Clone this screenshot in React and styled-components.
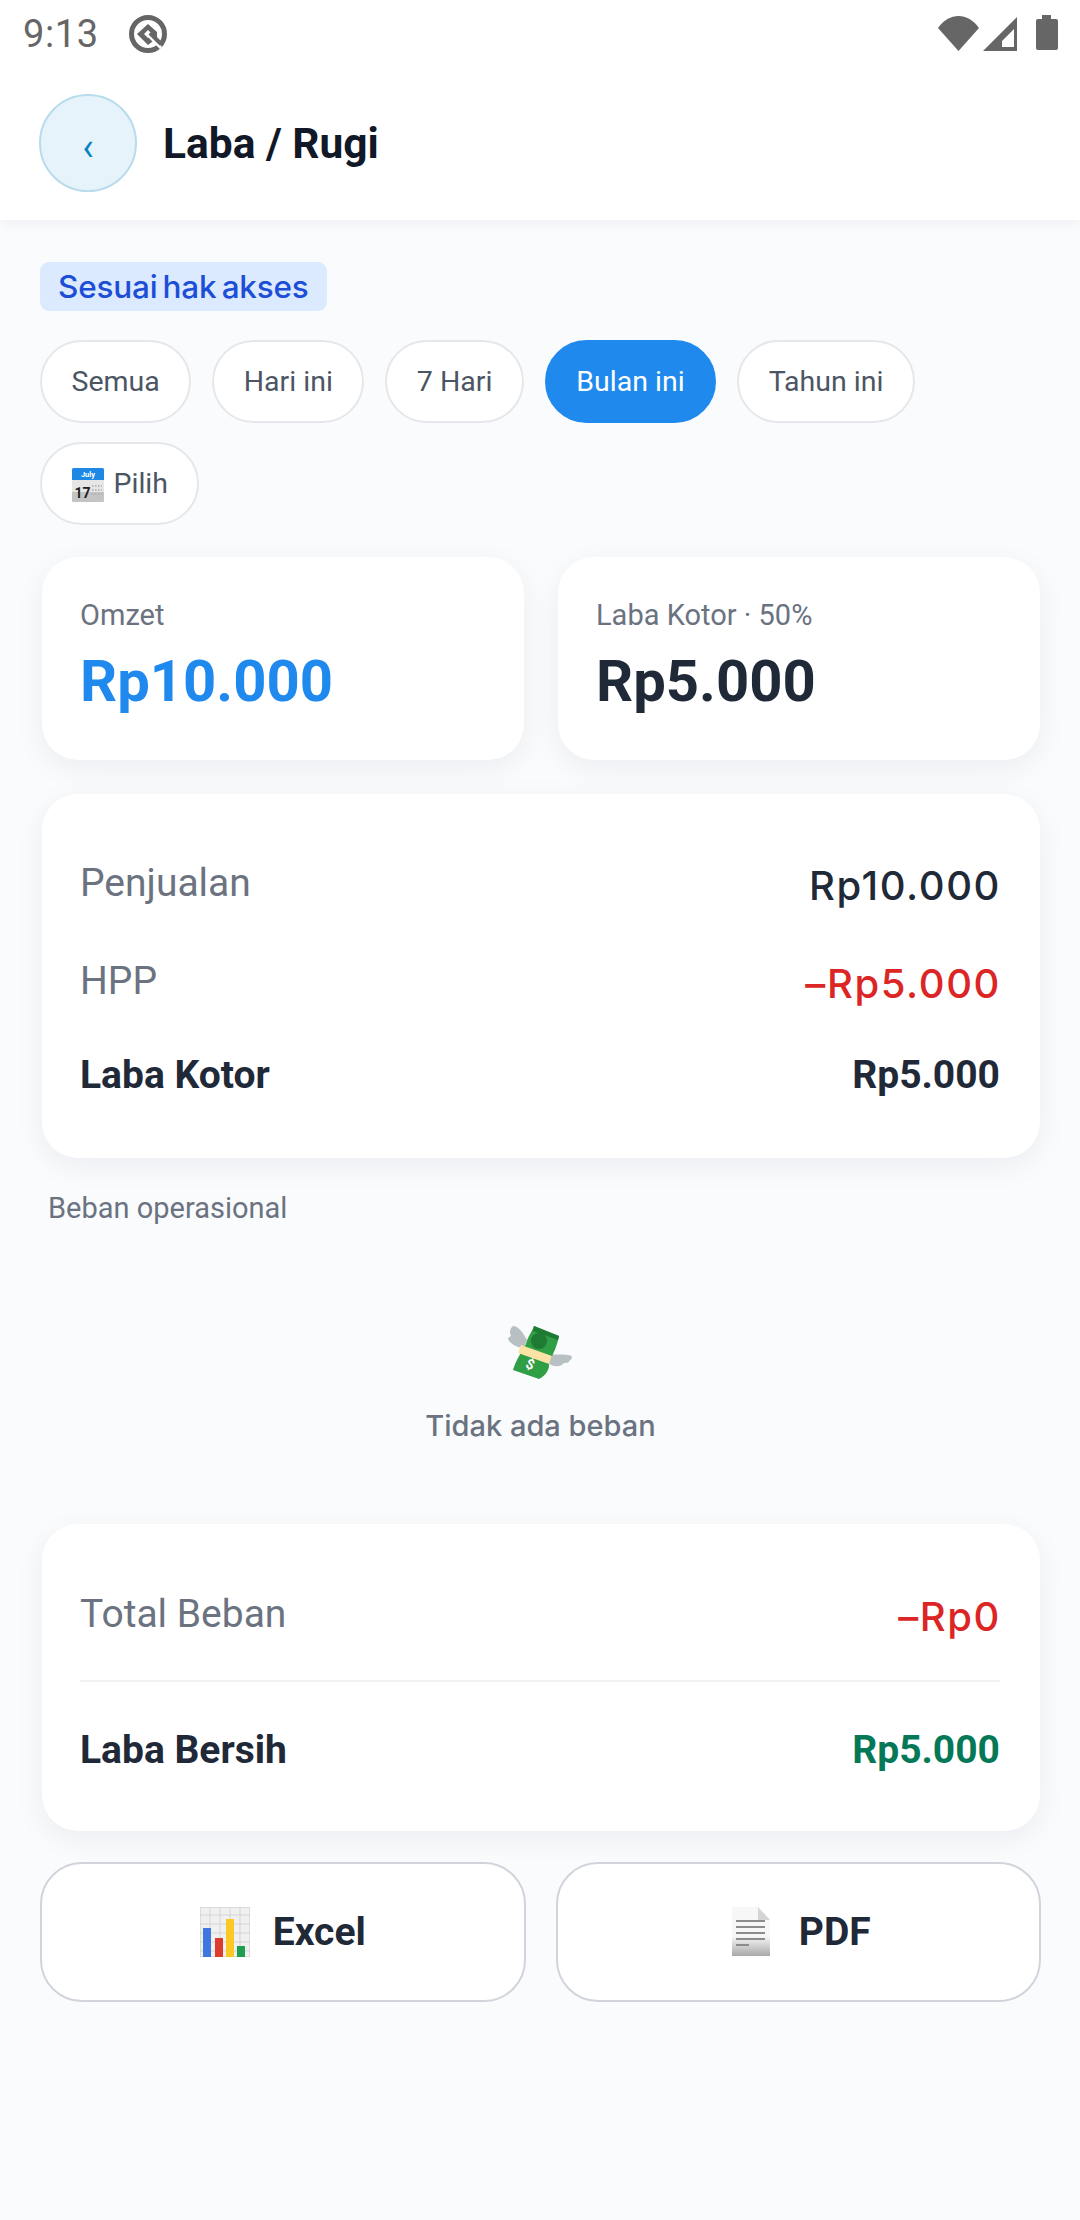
import styled, { createGlobalStyle } from "styled-components";

const Global = createGlobalStyle`
  html, body { margin: 0; padding: 0; background: #f9fbfd; }
  * { box-sizing: border-box; }
  body { font-family: Roboto, "Liberation Sans", sans-serif; }
`;

const WifiIcon = () => (
  <svg width="41" height="35" viewBox="0 0 41 35">
    <path d="M0 12C11 -4 30 -4 41 12L20.5 35Z" fill="#666" />
  </svg>
);

const SignalIcon = () => (
  <svg width="36" height="35" viewBox="0 0 36 35">
    <path fillRule="evenodd" d="M35 1V35H1ZM32 13L20 25V31H32Z" fill="#666" />
  </svg>
);

const BatteryIcon = () => (
  <svg width="22" height="36" viewBox="0 0 22 36">
    <path d="M6 0H15V4H20Q22 4 22 6V33Q22 35 20 35H2Q0 35 0 33V6Q0 4 2 4H6Z" fill="#666" />
  </svg>
);

const AtIcon = () => (
  <svg width="40" height="40" viewBox="0 0 40 40" fill="none">
    <circle cx="20" cy="20" r="16.5" stroke="#666" strokeWidth="5" />
    <path d="M9 20L20 10L29 18V24L20 31Z" fill="#666" />
    <path d="M16 20L20 16L24 20L20 24Z" fill="#fff" />
    <path d="M20 21L33 34" stroke="#fff" strokeWidth="3" />
    <path d="M22 19L33 30" stroke="#666" strokeWidth="4" />
  </svg>
);

const CalendarEmoji = () => (
  <svg width="32" height="34" viewBox="0 0 32 34">
    <rect x="0" y="0" width="32" height="34" rx="1.5" fill="#e6e6e6" />
    <path d="M0 24H32V32.5Q32 34 30.5 34H1.5Q0 34 0 32.5Z" fill="#c4c4c4" />
    <path d="M1.5 0H30.5Q32 0 32 1.5V12H0V1.5Q0 0 1.5 0Z" fill="#1e88e5" />
    <text x="16" y="9" fontSize="7.5" fontWeight="700" fill="#fff" textAnchor="middle" fontFamily="Roboto">July</text>
    <text x="2.5" y="30" fontSize="14" fontWeight="700" fill="#222" fontFamily="Roboto">17</text>
    <path d="M20 18h10M20 22h10M20 26h10" stroke="#aaa" strokeWidth="1.4" strokeDasharray="1.5 1.5" />
  </svg>
);

const MoneyEmoji = () => (
  <svg width="66" height="56" viewBox="0 0 66 56">
    <path d="M5 0C10 0 14 5 19 14L16 22C10 22 0 17 0 12C2 11 3 10 3 9C1 7 2 2 5 0Z" fill="#b9c0c4" />
    <path d="M40 28C48 29 54 28 60 29C65 29 65 33 62 34C61 37 58 37 56 37C52 42 44 41 39 36Z" fill="#b9c0c4" />
    <path d="M26 0L51 10C49 20 46 26 41 37C42 44 37 50 31 53L5 44C8 34 13 27 18 18C20 10 24 6 26 0Z" fill="#2f9e44" />
    <path d="M26 0L51 10L50 14L25 5Z" fill="#1f7a33" />
    <circle cx="31" cy="15" r="8" fill="#1f7a33" />
    <path d="M13 19L44 30L41 38L10 27Z" fill="#fbe3a6" />
    <text x="22" y="43" fontSize="14" fontWeight="700" fill="#fff" textAnchor="middle" fontFamily="Roboto" transform="rotate(22 22 39)">$</text>
  </svg>
);

const ChartEmoji = () => (
  <svg width="50" height="50" viewBox="0 0 50 50">
    <rect width="50" height="50" fill="#f0f0f0" stroke="#c8c8c8" />
    <path d="M0 8H50M0 17H50M0 26H50M0 35H50M0 44H50M10 0V50M20 0V50M30 0V50M40 0V50" stroke="#d4d4d4" strokeWidth="1" />
    <rect x="3" y="21" width="8" height="29" fill="#3f76e0" />
    <rect x="15" y="31" width="8" height="19" fill="#dc3b2e" />
    <rect x="26" y="12" width="8" height="38" fill="#fbc926" />
    <rect x="37" y="39" width="8" height="11" fill="#1e9e50" />
  </svg>
);

const PageEmoji = () => (
  <svg width="50" height="50" viewBox="0 0 50 50">
    <defs>
      <linearGradient id="pageFill" x1="0" y1="0" x2="0" y2="1">
        <stop offset="0.6" stopColor="#f7f7f7" />
        <stop offset="1" stopColor="#a8a8a8" />
      </linearGradient>
    </defs>
    <path d="M6 0H32L44 13V49H6Z" fill="url(#pageFill)" />
    <path d="M32 0L44 13H32Z" fill="#d5d5d5" />
    <path d="M10 14H39M10 20H39M10 26H39M10 32H39M10 38H23" stroke="#8c8c8c" strokeWidth="2" />
  </svg>
);

const Page = styled.div`
  width: 1080px;
  height: 2220px;
  background: #f9fbfd;
  overflow: hidden;
`;

const TopArea = styled.header`
  background: #fff;
  height: 220px;
  box-shadow: 0 3px 14px rgba(17, 24, 39, 0.05);
`;

const StatusBar = styled.div`
  height: 74px;
  padding: 13px 22px 0 23px;
  display: flex;
  align-items: flex-start;
  justify-content: space-between;
`;

const StatusLeft = styled.div`
  display: flex;
  align-items: center;
  gap: 29px;
`;

const Clock = styled.span`
  font-size: 38px;
  line-height: 42px;
  color: #666;
  letter-spacing: 0.6px;
`;

const StatusRight = styled.div`
  display: flex;
  align-items: center;
  gap: 3px;
  padding: 2px 0 0;
`;

const Battery = styled.span`
  display: flex;
  margin-left: 15px;
`;

const HeaderRow = styled.div`
  display: flex;
  align-items: center;
  gap: 26px;
  padding: 20px 39px 0;
`;

const BackButton = styled.button`
  width: 98px;
  height: 98px;
  border-radius: 50%;
  border: 2px solid #b8dcec;
  background: #e6f3fb;
  color: #0284c7;
  font: 400 38px/1 Roboto, sans-serif;
  padding: 8px 0 0;
  display: flex;
  align-items: center;
  justify-content: center;
`;

const Title = styled.h1`
  margin: 0;
  font-size: 42.5px;
  font-weight: 700;
  color: #111827;
`;

const Content = styled.main`
  padding: 42px 39px 0 40px;
  display: flex;
  flex-direction: column;
`;

const AccessBadge = styled.span`
  align-self: flex-start;
  height: 49px;
  padding: 0 18px;
  border-radius: 9px;
  background: #dbeafe;
  color: #1d4ed8;
  font: 500 31.5px/49px Inter, sans-serif;
  letter-spacing: -0.2px;
  word-spacing: -3px;
`;

const ChipRow = styled.div`
  display: flex;
  flex-wrap: wrap;
  gap: 19px 21px;
  margin-top: 29px;
`;

const Chip = styled.button`
  height: 83px;
  padding: 2px 29.5px 0;
  border-radius: 42px;
  border: 2px solid ${(p) => (p.$active ? "#2089ee" : "#e5e7eb")};
  background: ${(p) => (p.$active ? "#2089ee" : "#fff")};
  color: ${(p) => (p.$active ? "#fff" : "#4b5563")};
  font: 400 28.5px/1 Roboto, sans-serif;
  display: flex;
  align-items: center;
  gap: 10px;
`;

const StatRow = styled.div`
  display: grid;
  grid-template-columns: 1fr 1fr;
  gap: 34px;
  margin: 32px 1px 0 2px;
`;

const Card = styled.section`
  background: #fff;
  border-radius: 36px;
  box-shadow: 0 8px 30px rgba(17, 24, 39, 0.06);
`;

const StatCard = styled(Card)`
  height: 203px;
  padding: 41px 38px 0;
`;

const StatLabel = styled.div`
  font-size: 29px;
  line-height: 34px;
  color: #6b7280;
`;

const StatValue = styled.div`
  margin-top: 15px;
  font-size: 58px;
  line-height: 68px;
  font-weight: 700;
  color: ${(p) => p.$color};
`;

const SummaryCard = styled(Card)`
  margin: ${(p) => p.$margin};
  height: ${(p) => p.$height}px;
  padding: ${(p) => p.$top}px 40px 0 38px;
  display: flex;
  flex-direction: column;
`;

const Row = styled.div`
  display: flex;
  align-items: center;
  justify-content: space-between;
  height: ${(p) => p.$height}px;
`;

const RowLabel = styled.span`
  font-size: 39px;
  color: #6b7280;
  padding-bottom: 6px;
`;

const RowValue = styled.span`
  font: 500 40px/1 Inter, sans-serif;
  letter-spacing: 1.6px;
  margin-right: -1px;
  color: ${(p) => p.$color};
`;

const BoldLabel = styled.span`
  font-size: 39px;
  font-weight: 700;
  color: #1f2937;
`;

const BoldValue = styled(BoldLabel)`
  color: ${(p) => p.$color};
`;

const Divider = styled.div`
  height: 2px;
  margin-top: 5px;
  background: #f0f1f3;
`;

const SectionLabel = styled.div`
  margin: 34px 0 0 8px;
  font-size: 29px;
  line-height: 32px;
  color: #6b7280;
`;

const EmptyState = styled.div`
  display: flex;
  flex-direction: column;
  align-items: center;
  padding-top: 102px;
  height: 300px;
`;

const EmptyText = styled.div`
  margin-top: 26px;
  font: 500 29px/36px Inter, sans-serif;
  color: #6b7280;
`;

const ActionRow = styled.div`
  display: grid;
  grid-template-columns: 1fr 1fr;
  gap: 30px;
  margin: 31px 0 0;
`;

const ActionButton = styled.button`
  height: 140px;
  border-radius: 42px;
  border: 2px solid #d1d5db;
  background: #fff;
  display: flex;
  align-items: center;
  justify-content: center;
  gap: 23px;
  font: 700 39px/1 Roboto, sans-serif;
  color: #1f2937;
`;

export default function App() {
  return (
    <Page>
      <Global />
      <TopArea>
        <StatusBar>
          <StatusLeft>
            <Clock>9:13</Clock>
            <AtIcon />
          </StatusLeft>
          <StatusRight>
            <WifiIcon />
            <SignalIcon />
            <Battery>
              <BatteryIcon />
            </Battery>
          </StatusRight>
        </StatusBar>
        <HeaderRow>
          <BackButton>‹</BackButton>
          <Title>Laba / Rugi</Title>
        </HeaderRow>
      </TopArea>
      <Content>
        <AccessBadge>Sesuai hak akses</AccessBadge>
        <ChipRow>
          <Chip>Semua</Chip>
          <Chip>Hari ini</Chip>
          <Chip>7 Hari</Chip>
          <Chip $active>Bulan ini</Chip>
          <Chip>Tahun ini</Chip>
          <Chip>
            <CalendarEmoji />
            Pilih
          </Chip>
        </ChipRow>
        <StatRow>
          <StatCard>
            <StatLabel>Omzet</StatLabel>
            <StatValue $color="#2089ee">Rp10.000</StatValue>
          </StatCard>
          <StatCard>
            <StatLabel>Laba Kotor · 50%</StatLabel>
            <StatValue $color="#1f2937">Rp5.000</StatValue>
          </StatCard>
        </StatRow>
        <SummaryCard $margin="34px 1px 0 2px" $height={364} $top={43}>
          <Row $height={98}>
            <RowLabel>Penjualan</RowLabel>
            <RowValue $color="#1f2937">Rp10.000</RowValue>
          </Row>
          <Row $height={98}>
            <RowLabel>HPP</RowLabel>
            <RowValue $color="#dc2626">–Rp5.000</RowValue>
          </Row>
          <Row $height={84}>
            <BoldLabel>Laba Kotor</BoldLabel>
            <BoldValue $color="#1f2937">Rp5.000</BoldValue>
          </Row>
        </SummaryCard>
        <SectionLabel>Beban operasional</SectionLabel>
        <EmptyState>
          <MoneyEmoji />
          <EmptyText>Tidak ada beban</EmptyText>
        </EmptyState>
        <SummaryCard $margin="0 1px 0 2px" $height={307} $top={35}>
          <Row $height={116}>
            <RowLabel>Total Beban</RowLabel>
            <RowValue $color="#dc2626">–Rp0</RowValue>
          </Row>
          <Divider />
          <Row $height={136}>
            <BoldLabel>Laba Bersih</BoldLabel>
            <BoldValue $color="#047857">Rp5.000</BoldValue>
          </Row>
        </SummaryCard>
        <ActionRow>
          <ActionButton>
            <ChartEmoji />
            Excel
          </ActionButton>
          <ActionButton>
            <PageEmoji />
            PDF
          </ActionButton>
        </ActionRow>
      </Content>
    </Page>
  );
}
